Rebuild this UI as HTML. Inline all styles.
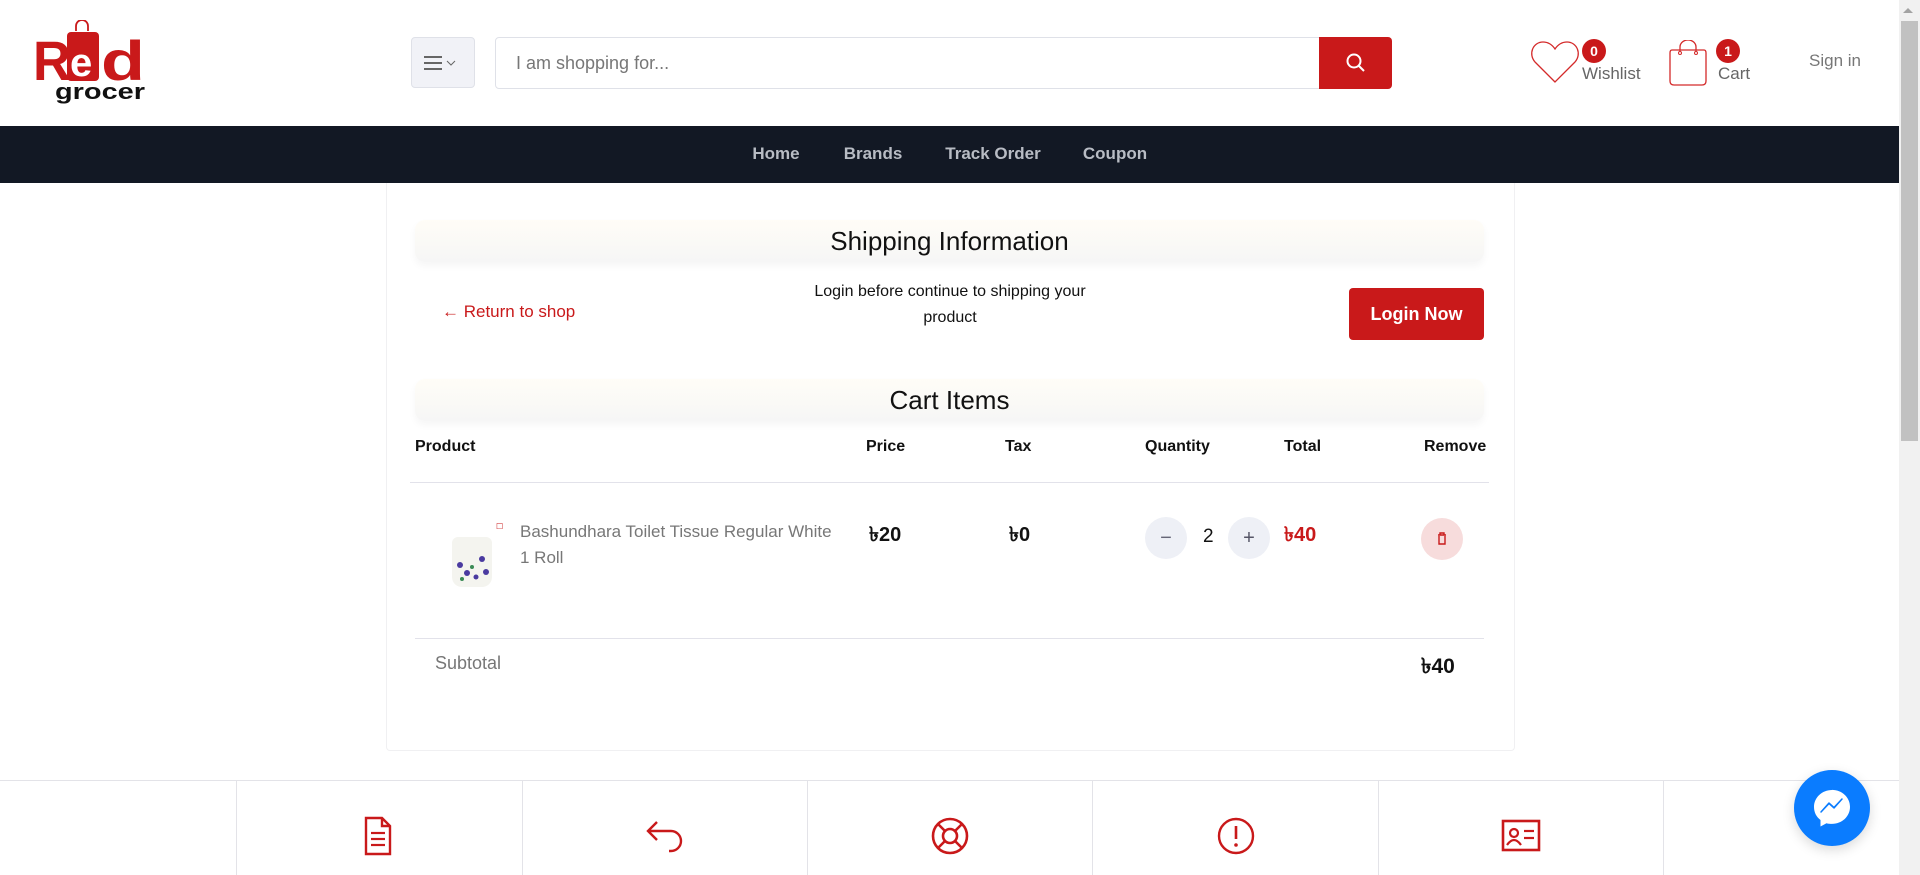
<!DOCTYPE html>
<html><head><meta charset="utf-8">
<style>
*{box-sizing:border-box;margin:0;padding:0}
body{width:1920px;height:875px;overflow:hidden;background:#fff;font-family:"Liberation Sans",sans-serif;position:relative;color:#111}
.a{position:absolute}
.nav{left:0;top:126px;width:1899px;height:57px;background:#121824}
.nav span{position:absolute;top:18px;color:#b8bcc4;font-weight:bold;font-size:17px;transform:translateX(-50%)}
.badge{width:24px;height:24px;border-radius:12px;background:#c9191a;color:#fff;font-size:14px;font-weight:bold;text-align:center;line-height:24px}
.band{left:415px;width:1069px;height:42px;border-radius:10px;background:linear-gradient(#fffdf7,#f6f6f6);box-shadow:0 4px 8px rgba(0,0,0,.04);text-align:center;font-size:26px;color:#111;line-height:42px}
.th{top:438px;font-size:16px;font-weight:bold}
.circ{width:42px;height:42px;border-radius:21px;background:#eef0f6;text-align:center;line-height:42px;color:#667;font-size:20px}
.col{top:781px;height:94px;border-left:1px solid #e3e3e8}
</style></head><body>
<!-- logo -->
<div class="a" style="left:33px;top:20px;width:122px;height:88px">
<svg width="122" height="88" viewBox="0 0 122 88">
<path d="M43 11 v-5 a6 6 0 0 1 12 0 v5" fill="none" stroke="#c9191a" stroke-width="1.8"/>
<text x="0" y="60" font-family="Liberation Sans" font-weight="bold" font-size="56" fill="#c9191a" textLength="38" lengthAdjust="spacingAndGlyphs">R</text>
<rect x="34" y="12" width="32" height="49" rx="4" fill="#c9191a"/>
<text x="37" y="56" font-family="Liberation Sans" font-weight="bold" font-size="40" fill="#fff">e</text>
<text x="68" y="60" font-family="Liberation Sans" font-weight="bold" font-size="56" fill="#c9191a" textLength="44" lengthAdjust="spacingAndGlyphs">d</text>
<text x="22" y="79" font-family="Liberation Sans" font-weight="bold" font-size="22" fill="#111" textLength="90" lengthAdjust="spacingAndGlyphs">grocer</text>
</svg></div>
<!-- menu button -->
<div class="a" style="left:411px;top:37px;width:64px;height:51px;background:#f1f2f7;border:1px solid #dfe1e8;border-radius:4px">
<svg width="64" height="51"><g stroke="#666" stroke-width="2"><line x1="12" y1="19" x2="30" y2="19"/><line x1="12" y1="25" x2="30" y2="25"/><line x1="12" y1="31" x2="30" y2="31"/></g><path d="M35 23 l4 4 l4 -4" fill="none" stroke="#666" stroke-width="1"/></svg></div>
<!-- search -->
<div class="a" style="left:495px;top:37px;width:826px;height:52px;border:1px solid #dfe1e8;border-radius:4px 0 0 4px;font-size:18px;color:#777;padding:15px 20px">I am shopping for...</div>
<div class="a" style="left:1319px;top:37px;width:73px;height:52px;background:#c9191a;border-radius:0 4px 4px 0">
<svg width="73" height="52"><circle cx="35" cy="24" r="6.5" fill="none" stroke="#fff" stroke-width="2"/><line x1="40" y1="29" x2="45" y2="34" stroke="#fff" stroke-width="2"/></svg></div>
<!-- wishlist -->
<svg class="a" style="left:1530px;top:40px" width="50" height="45" viewBox="0 0 50 45"><path d="M25 42 L5 22 C-2 14 3 2 13 2 C19 2 23 6 25 9 C27 6 31 2 37 2 C47 2 52 14 45 22 Z" fill="none" stroke="#d42a2a" stroke-width="1.3"/></svg>
<div class="a badge" style="left:1582px;top:39px">0</div>
<div class="a" style="left:1582px;top:64px;font-size:17px;color:#666">Wishlist</div>
<svg class="a" style="left:1668px;top:40px" width="40" height="46" viewBox="0 0 40 46"><path d="M4 10 h32 q2 0 2 3 l0 28 q0 4 -4 4 h-28 q-4 0 -4 -4 l0 -28 q0 -3 2 -3z" fill="none" stroke="#d42a2a" stroke-width="1.3"/><path d="M12 12 v-5 a8 7 0 0 1 16 0 v5" fill="none" stroke="#d42a2a" stroke-width="1.3"/><circle cx="12" cy="13" r="1.5" fill="none" stroke="#d42a2a"/><circle cx="28" cy="13" r="1.5" fill="none" stroke="#d42a2a"/></svg>
<div class="a badge" style="left:1716px;top:39px">1</div>
<div class="a" style="left:1718px;top:64px;font-size:17px;color:#666">Cart</div>
<div class="a" style="left:1809px;top:51px;font-size:17px;color:#777">Sign in</div>
<!-- scrollbar -->
<div class="a" style="left:1899px;top:0;width:21px;height:875px;background:#f1f1f1"></div>
<div class="a" style="left:1901px;top:21px;width:17px;height:420px;background:#c1c1c1"></div>
<div class="a" style="left:1903px;top:8px;width:0;height:0;border-left:5px solid transparent;border-right:5px solid transparent;border-bottom:5px solid #a3a3a3"></div>
<!-- nav -->
<div class="a nav"><span style="left:776px">Home</span><span style="left:873px">Brands</span><span style="left:993px">Track Order</span><span style="left:1115px">Coupon</span></div>
<!-- card -->
<div class="a" style="left:386px;top:183px;width:1129px;height:568px;border:1px solid #f0f0f2;border-top:none;border-radius:0 0 4px 4px"></div>
<div class="a band" style="top:220px">Shipping Information</div>
<div class="a" style="left:442px;top:302px;font-size:17px;color:#c9191a">← Return to shop</div>
<div class="a" style="left:800px;top:279px;width:300px;text-align:center;font-size:16px;line-height:26px;color:#111">Login before continue to shipping your product</div>
<div class="a" style="left:1349px;top:288px;width:135px;height:52px;background:#c9191a;border-radius:4px;color:#fff;font-weight:bold;font-size:18px;text-align:center;line-height:52px">Login Now</div>
<div class="a band" style="top:379px">Cart Items</div>
<div class="a th" style="left:415px">Product</div>
<div class="a th" style="left:866px">Price</div>
<div class="a th" style="left:1005px">Tax</div>
<div class="a th" style="left:1145px">Quantity</div>
<div class="a th" style="left:1284px">Total</div>
<div class="a th" style="left:1424px">Remove</div>
<div class="a" style="left:410px;top:482px;width:1079px;height:1px;background:#e2e2ea"></div>
<!-- product img -->
<div class="a" style="left:452px;top:537px;width:40px;height:50px;border-radius:6px 6px 10px 10px;background:#f4f4ef;overflow:hidden">
<svg width="40" height="50"><g fill="#4a3aa0"><circle cx="8" cy="28" r="3"/><circle cx="15" cy="36" r="3"/><circle cx="30" cy="22" r="3"/><circle cx="34" cy="35" r="3"/><circle cx="24" cy="40" r="2.5"/></g><g fill="#3a8a55"><circle cx="20" cy="30" r="2"/><circle cx="10" cy="42" r="2"/></g></svg></div>
<div class="a" style="left:496px;top:522px;font-size:8px;color:#c9191a">☐</div>
<div class="a" style="left:520px;top:519px;width:318px;font-size:17px;line-height:26px;color:#777">Bashundhara Toilet Tissue Regular White 1 Roll</div>
<div class="a" style="left:869px;top:520px;font-size:20px;font-weight:bold">৳20</div>
<div class="a" style="left:1009px;top:520px;font-size:20px;font-weight:bold">৳0</div>
<div class="a circ" style="left:1145px;top:517px">−</div>
<div class="a" style="left:1203px;top:526px;font-size:19px">2</div>
<div class="a circ" style="left:1228px;top:517px;color:#556">+</div>
<div class="a" style="left:1284px;top:520px;font-size:20px;font-weight:bold;color:#c9191a">৳40</div>
<div class="a circ" style="left:1421px;top:518px;background:#f7dcdc">
<svg width="42" height="42"><g fill="none" stroke="#c9191a" stroke-width="1.4"><path d="M17 17 h8 M19 17 v-2 h4 v2 M18 18 v8 h6 v-8"/></g></svg></div>
<div class="a" style="left:415px;top:638px;width:1069px;height:1px;background:#e2e2ea"></div>
<div class="a" style="left:435px;top:653px;font-size:18px;color:#777">Subtotal</div>
<div class="a" style="left:1421px;top:650px;font-size:21px;font-weight:bold">৳40</div>
<!-- footer -->
<div class="a" style="left:0;top:780px;width:1899px;height:1px;background:#e3e3e8"></div>
<div class="a col" style="left:236px"></div><div class="a col" style="left:522px"></div><div class="a col" style="left:807px"></div><div class="a col" style="left:1092px"></div><div class="a col" style="left:1378px"></div><div class="a col" style="left:1663px"></div>
<svg class="a" style="left:360px;top:816px" width="36" height="40"><path d="M6 2 h16 l8 8 v28 h-24z M22 2 v8 h8" fill="none" stroke="#c9191a" stroke-width="2.4"/><g stroke="#c9191a" stroke-width="2.2"><line x1="11" y1="17" x2="25" y2="17"/><line x1="11" y1="23" x2="25" y2="23"/><line x1="11" y1="29" x2="25" y2="29"/></g></svg>
<svg class="a" style="left:645px;top:818px" width="40" height="36"><path d="M12 4 L3 13 L12 22 M3 13 H26 a10 10 0 0 1 0 20 h-2" fill="none" stroke="#c9191a" stroke-width="2.4"/></svg>
<svg class="a" style="left:930px;top:816px" width="40" height="40"><circle cx="20" cy="20" r="17" fill="none" stroke="#c9191a" stroke-width="2.6"/><circle cx="20" cy="20" r="7" fill="none" stroke="#c9191a" stroke-width="2.6"/><g stroke="#c9191a" stroke-width="2.6"><line x1="8" y1="8" x2="15" y2="15"/><line x1="32" y1="8" x2="25" y2="15"/><line x1="8" y1="32" x2="15" y2="25"/><line x1="32" y1="32" x2="25" y2="25"/></g></svg>
<svg class="a" style="left:1216px;top:816px" width="40" height="40"><circle cx="20" cy="20" r="17" fill="none" stroke="#c9191a" stroke-width="2.4"/><line x1="20" y1="10" x2="20" y2="23" stroke="#c9191a" stroke-width="2.6"/><circle cx="20" cy="29" r="1.8" fill="#c9191a"/></svg>
<svg class="a" style="left:1501px;top:818px" width="40" height="36"><rect x="2" y="3" width="36" height="29" fill="none" stroke="#c9191a" stroke-width="2.6"/><circle cx="13" cy="15" r="4" fill="none" stroke="#c9191a" stroke-width="2.2"/><path d="M6 27 q7 -10 14 0" fill="none" stroke="#c9191a" stroke-width="2.2"/><g stroke="#c9191a" stroke-width="2.2"><line x1="23" y1="13" x2="33" y2="13"/><line x1="23" y1="20" x2="33" y2="20"/></g></svg>
<!-- messenger -->
<div class="a" style="left:1794px;top:770px;width:76px;height:76px;border-radius:38px;background:#0a7cff;box-shadow:0 4px 12px rgba(0,0,0,.15)">
<svg width="76" height="76"><path d="M38 20 c-10 0 -18 7.5 -18 17 c0 5.5 2.5 10 6.5 13 v6.5 l6 -3.3 c1.7 .5 3.5 .7 5.5 .7 c10 0 18 -7.5 18 -17 s-8 -17 -18 -17z" fill="#fff"/><path d="M27 42 l8 -9 l5 4.5 l8 -8.5 l-8 9 l-5 -4.5z" fill="#0a7cff" stroke="#0a7cff" stroke-width="1.5" stroke-linejoin="round"/></svg></div>
</body></html>
